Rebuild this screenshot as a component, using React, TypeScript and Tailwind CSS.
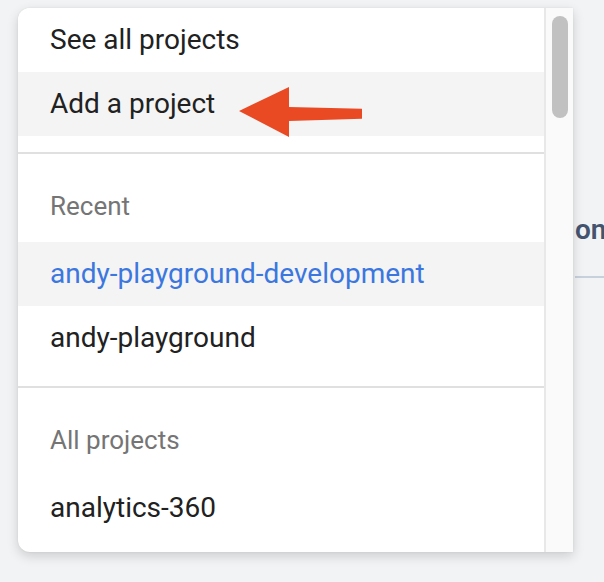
const recent = ['andy-playground-development', 'andy-playground'];

function MenuRow({
  label,
  active = false,
  link = false,
}: {
  label: string;
  active?: boolean;
  link?: boolean;
}) {
  return (
    <div
      className={`flex h-16 items-center pl-8 text-[28px] whitespace-nowrap ${
        active ? 'bg-[#f4f4f4]' : 'bg-white'
      } ${link ? 'text-[#3b77df]' : 'text-[#212121]'}`}
    >
      {label}
    </div>
  );
}

function SectionHeader({ label }: { label: string }) {
  return (
    <div className="flex h-[88px] items-center pt-4 pl-8 text-[26px] text-[#757575]">
      {label}
    </div>
  );
}

export default function App() {
  return (
    <div
      className="relative h-[582px] w-[604px] overflow-hidden bg-[#f2f3f5]"
      style={{ fontFamily: 'Roboto, "Noto Sans", sans-serif' }}
    >
      {/* page content behind the menu */}
      <div className="pt-[214px] pl-[575px]">
        <div className="text-[28px] leading-8 font-semibold whitespace-nowrap text-[#44546f]">
          on
        </div>
        <div className="mt-[30px] h-[2px] bg-[#c8d0dc]" />
      </div>

      {/* dropdown menu */}
      <div className="absolute top-2 left-[18px] flex h-[544px] w-[555px] overflow-hidden rounded-l-[12px] bg-white shadow-[0_4px_12px_rgba(0,0,0,0.16),0_0_2px_rgba(0,0,0,0.08)]">
        <div className="w-[526px] shrink-0">
          <MenuRow label="See all projects" />
          <MenuRow label="Add a project" active />
          <div className="h-4" />
          <div className="h-[2px] bg-[#e0e0e0]" />
          <SectionHeader label="Recent" />
          {recent.map((name, i) => (
            <MenuRow key={name} label={name} active={i === 0} link={i === 0} />
          ))}
          <div className="h-4" />
          <div className="h-[2px] bg-[#e0e0e0]" />
          <SectionHeader label="All projects" />
          <MenuRow label="analytics-360" />
        </div>
        <div className="flex-1 border-l-2 border-[#e8e8e8] bg-[#fafafa] pt-2 pl-1.5">
          <div className="h-[102px] w-4 rounded-full bg-[#c1c1c1]" />
        </div>
      </div>

      {/* annotation arrow */}
      <svg
        className="absolute top-[80px] left-[230px]"
        width="140"
        height="64"
        viewBox="0 0 140 64"
      >
        <polygon
          points="9,31 59,7 59,27 132,28.7 132,38.7 59,41 59,57"
          fill="#e94a24"
        />
      </svg>
    </div>
  );
}
